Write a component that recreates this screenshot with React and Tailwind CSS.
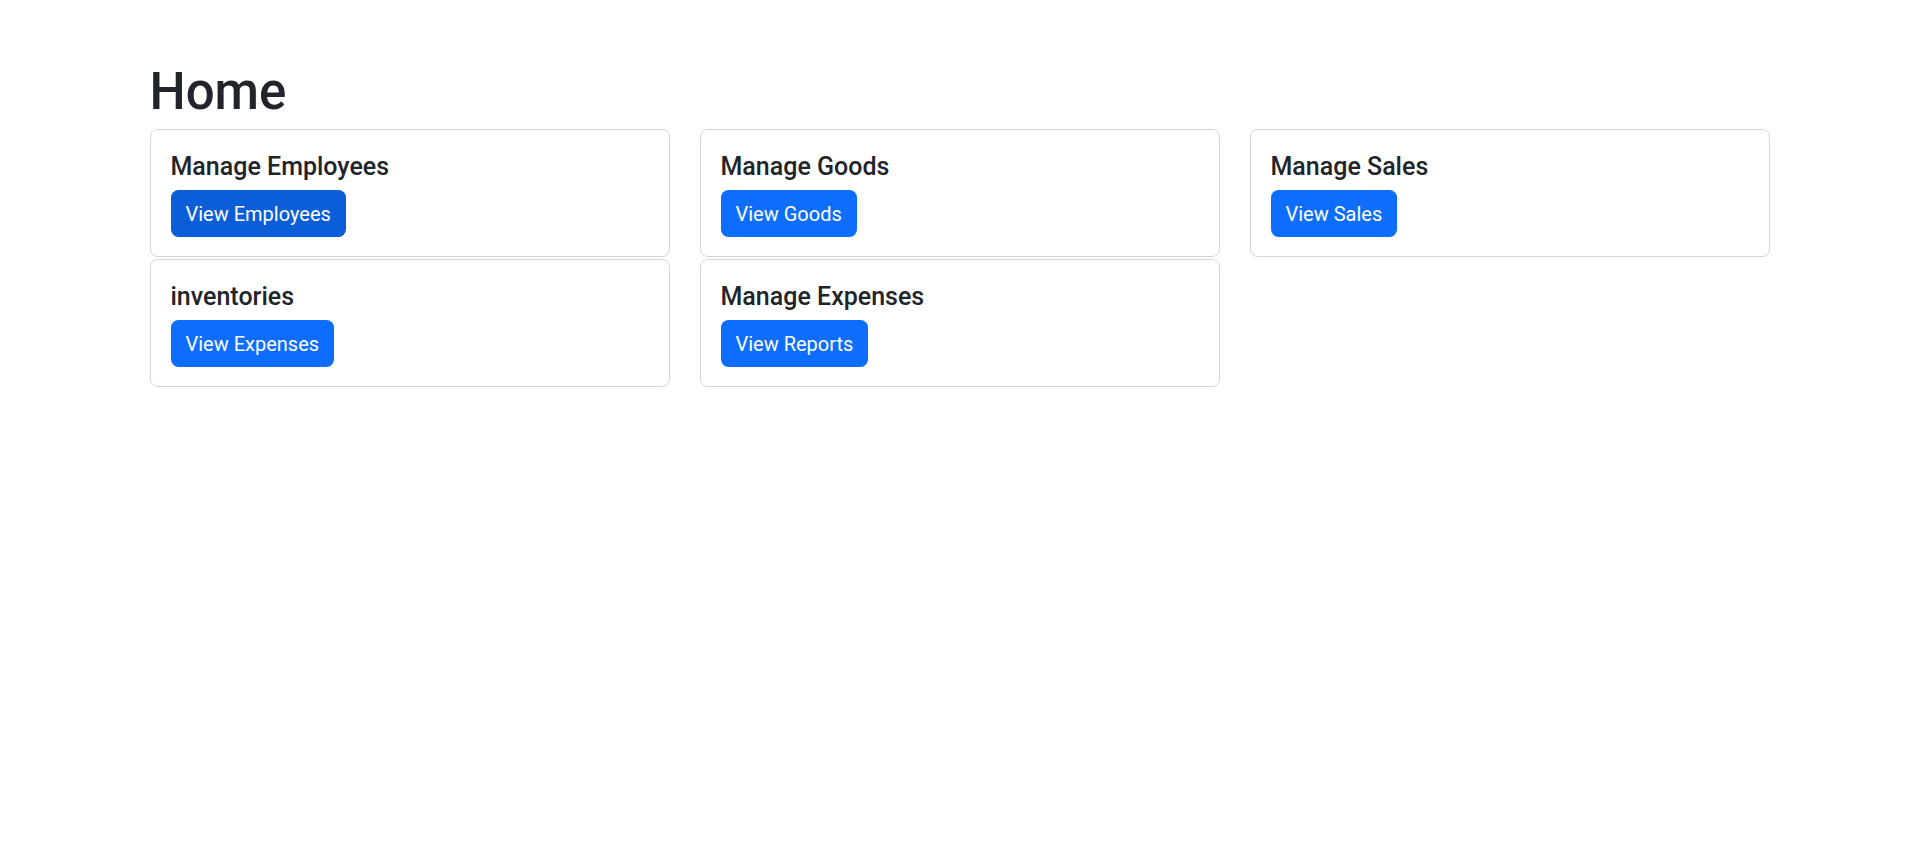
const sections = [
	{ title: "Manage Employees", action: "View Employees", active: true },
	{ title: "Manage Goods", action: "View Goods" },
	{ title: "Manage Sales", action: "View Sales" },
	{ title: "inventories", action: "View Expenses" },
	{ title: "Manage Expenses", action: "View Reports" },
];

function SectionCard({ title, action, active }) {
	return (
		<div className="h-[128px] bg-white border border-[#d3d4d5] rounded-[7.5px]">
			<div className="p-5">
				<h5 className="pt-[2px] text-[25px] leading-[30px] font-medium text-[#212529] mb-[8px]">
					{title}
				</h5>
				<button
					type="button"
					className={
						"inline-block px-[14px] py-[7.5px] text-[20px] leading-[30px] text-white border border-transparent rounded-[7.5px] " +
						(active ? "bg-[#0b5ed7]" : "bg-[#0d6efd] hover:bg-[#0b5ed7]")
					}
				>
					{action}
				</button>
			</div>
		</div>
	);
}

export default function App() {
	return (
		<div
			className="min-h-screen bg-white text-[#212529]"
			style={{ fontFamily: "Roboto, 'Noto Sans', sans-serif" }}
		>
			<div className="max-w-[1650px] mx-auto px-[15px] pt-[62px]">
				<h1 className="text-[51px] leading-[60px] font-medium mb-[7px]">Home</h1>
				<div className="grid grid-cols-3 gap-x-[30px] gap-y-[2px]">
					{sections.map((s) => (
						<SectionCard key={s.title} {...s} />
					))}
				</div>
			</div>
		</div>
	);
}
